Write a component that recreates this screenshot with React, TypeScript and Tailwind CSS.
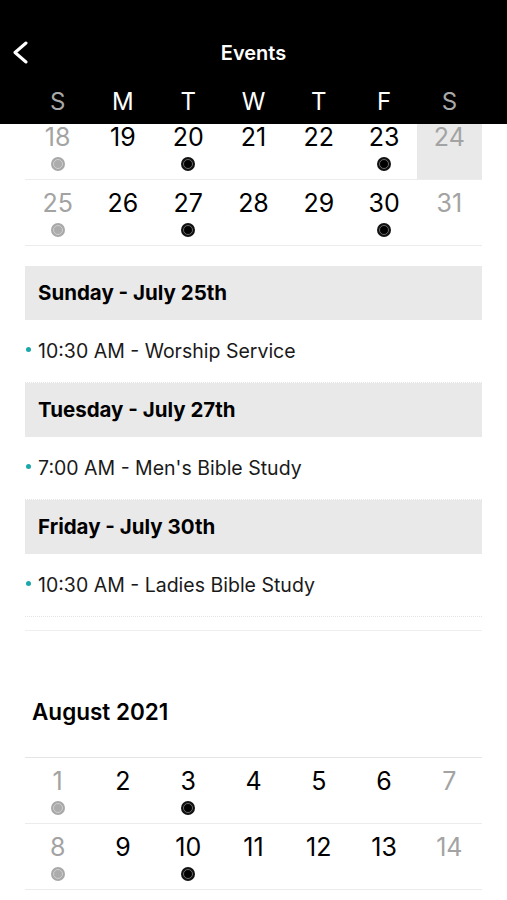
import React from "react";

type Day = { n: number; muted?: boolean; dot?: "dark" | "gray"; selected?: boolean };

const WEEKDAYS = ["S", "M", "T", "W", "T", "F", "S"];

const julyWeek1: Day[] = [
  { n: 18, muted: true, dot: "gray" },
  { n: 19 },
  { n: 20, dot: "dark" },
  { n: 21 },
  { n: 22 },
  { n: 23, dot: "dark" },
  { n: 24, muted: true, selected: true },
];

const julyWeek2: Day[] = [
  { n: 25, muted: true, dot: "gray" },
  { n: 26 },
  { n: 27, dot: "dark" },
  { n: 28 },
  { n: 29 },
  { n: 30, dot: "dark" },
  { n: 31, muted: true },
];

const augWeek1: Day[] = [
  { n: 1, muted: true, dot: "gray" },
  { n: 2 },
  { n: 3, dot: "dark" },
  { n: 4 },
  { n: 5 },
  { n: 6 },
  { n: 7, muted: true },
];

const augWeek2: Day[] = [
  { n: 8, muted: true, dot: "gray" },
  { n: 9 },
  { n: 10, dot: "dark" },
  { n: 11 },
  { n: 12 },
  { n: 13 },
  { n: 14, muted: true },
];

const events = [
  { day: "Sunday - July 25th", item: "10:30 AM - Worship Service" },
  { day: "Tuesday - July 27th", item: "7:00 AM - Men's Bible Study" },
  { day: "Friday - July 30th", item: "10:30 AM - Ladies Bible Study" },
];

function Dot({ kind }: { kind: "dark" | "gray" }) {
  if (kind === "dark") {
    return (
      <div className="mt-[5px] w-[14px] h-[14px] rounded-full bg-[#111] flex items-center justify-center">
        <div className="w-[10px] h-[10px] rounded-full border border-[#6b6b6b] bg-black" />
      </div>
    );
  }
  return (
    <div className="mt-[5px] w-[14px] h-[14px] rounded-full bg-[#a8a8a8] flex items-center justify-center">
      <div className="w-[10px] h-[10px] rounded-full border border-[#cfcfcf] bg-[#acacac]" />
    </div>
  );
}

function Week({ days }: { days: Day[] }) {
  return (
    <div className="grid grid-cols-7 h-[66px] border-b border-[#ececec]">
      {days.map((d, i) => (
        <div
          key={i}
          className={
            "flex flex-col items-center pt-[8px] " + (d.selected ? "bg-[#e9e9e9]" : "")
          }
        >
          <div
            className={
              "text-[25px] leading-[30px] " + (d.muted ? "text-[#a3a3a3]" : "text-black")
            }
          >
            {d.n}
          </div>
          {d.dot && <Dot kind={d.dot} />}
        </div>
      ))}
    </div>
  );
}

export default function App() {
  return (
    <div className="w-[507px] h-[900px] overflow-hidden bg-white font-['Inter',sans-serif]">
      <header className="bg-black h-[124px] pt-[38px]">
        <div className="relative flex justify-center">
          <svg
            className="absolute left-[12px] top-[2px]"
            width="18"
            height="24"
            viewBox="0 0 18 24"
            fill="none"
          >
            <polyline
              points="14,3 3,12.5 14,22"
              stroke="white"
              strokeWidth="3"
              strokeLinecap="round"
              strokeLinejoin="round"
            />
          </svg>
          <div className="text-white text-[20px] leading-[30px] font-semibold">Events</div>
        </div>
        <div className="grid grid-cols-7 mx-[25px] mt-[19px]">
          {WEEKDAYS.map((w, i) => (
            <div
              key={i}
              className={
                "text-center text-[24px] leading-[30px] " +
                (i === 0 || i === 6 ? "text-[#a9a9a9]" : "text-white")
              }
            >
              {w}
            </div>
          ))}
        </div>
      </header>

      <div className="mx-[25px]">
        <div className="h-[56px] overflow-hidden">
          <div className="-mt-[10px]">
            <Week days={julyWeek1} />
          </div>
        </div>
        <Week days={julyWeek2} />

        <div className="mt-[20px]">
          {events.map((e, i) => (
            <div key={i} className="border-b border-dotted border-[#e4e4e4]">
              <div className="h-[54px] bg-[#e9e9e9] flex items-center pl-[13px] text-[20.5px] font-bold text-black">
                {e.day}
              </div>
              <div className="h-[62px] flex items-center pt-[2px]">
                <div className="w-[5px] h-[5px] rounded-full bg-[#1ba8aa] ml-[1px] mr-[7px] -mt-[5px]" />
                <div className="text-[19.5px] text-[#1a1a1a]">{e.item}</div>
              </div>
            </div>
          ))}
          <div className="mt-[13px] border-b border-[#efefef]" />
        </div>

        <div className="pt-[68px] pb-[32px] pl-[7px] text-[22.5px] leading-[26px] font-semibold text-black">
          August 2021
        </div>
        <div className="border-t border-[#e4e4e4]">
          <Week days={augWeek1} />
          <Week days={augWeek2} />
        </div>
      </div>
    </div>
  );
}
